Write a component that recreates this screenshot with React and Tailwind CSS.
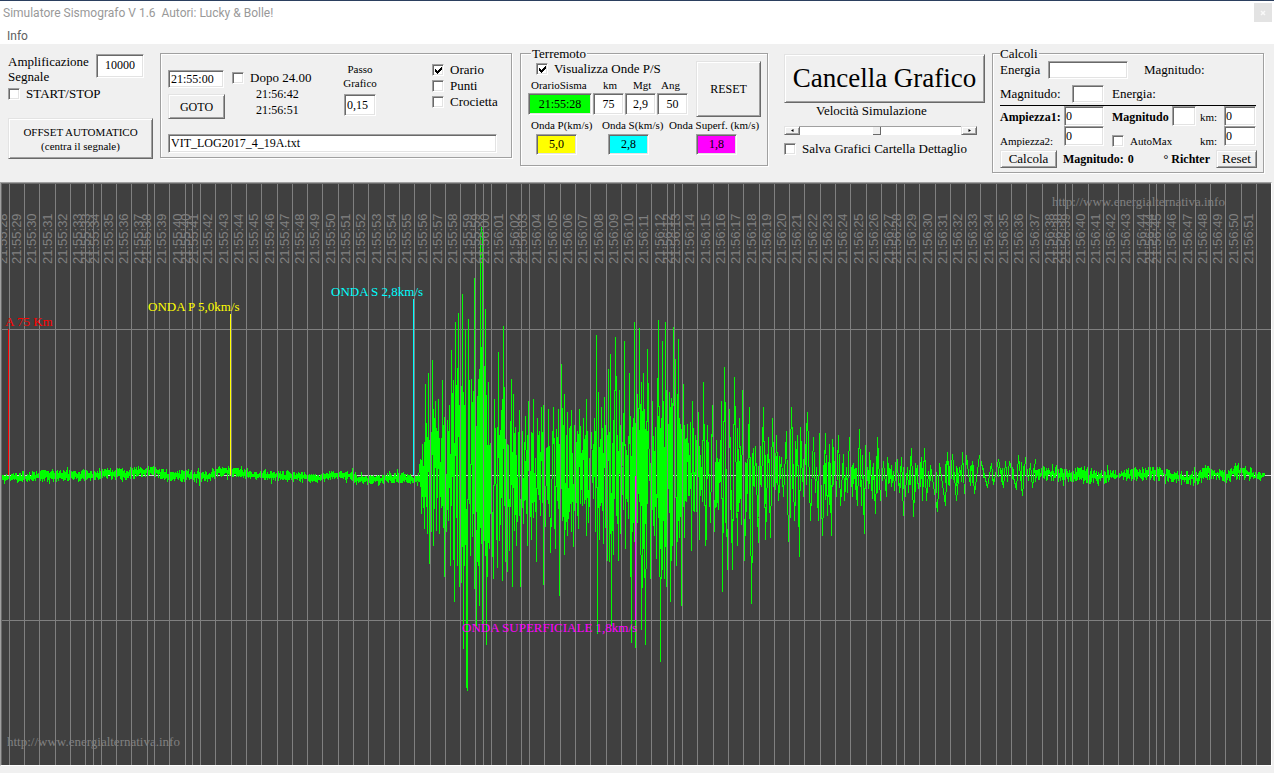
import React from "react";

const SUNKEN =
  "block min-w-0 rounded-none border border-t-[#a0a0a0] border-l-[#a0a0a0] border-r-white border-b-white shadow-[inset_1px_1px_0_#696969,inset_-1px_-1px_0_#e3e3e3] text-[12px] leading-4 text-black outline-none";
const RAISED =
  "block border border-t-[#e3e3e3] border-l-[#e3e3e3] border-r-[#696969] border-b-[#696969] bg-[#f0f0f0] shadow-[inset_1px_1px_0_#fff,inset_-1px_-1px_0_#a0a0a0] text-black";
const GROUP =
  "min-w-0 border border-[#a0a0a0] shadow-[1px_1px_0_#fff,inset_1px_1px_0_#fff]";

function Field({ label, className = "", value = "", id }) {
  return (
    <input
      id={id}
      type="text"
      aria-label={label}
      defaultValue={value}
      className={`${SUNKEN} ${className}`}
    />
  );
}

function Check({ children, checked = false, className = "" }) {
  return (
    <label className={`flex items-center whitespace-nowrap ${className}`}>
      <span className="grid size-3 shrink-0">
        <input
          type="checkbox"
          defaultChecked={checked}
          className="peer col-start-1 row-start-1 size-3 appearance-none border border-t-[#a0a0a0] border-l-[#a0a0a0] border-r-white border-b-white bg-white shadow-[inset_1px_1px_0_#696969,inset_-1px_-1px_0_#e3e3e3]"
        />
        <svg
          viewBox="0 0 12 12"
          shapeRendering="crispEdges"
          className="pointer-events-none col-start-1 row-start-1 hidden size-3 peer-checked:block"
        >
          <path
            d="M3 5h1v3h-1zM4 6h1v3h-1zM5 7h1v3h-1zM6 6h1v3h-1zM7 5h1v3h-1zM8 4h1v3h-1zM9 3h1v3h-1z"
            fill="#000"
          />
        </svg>
      </span>
      <span>{children}</span>
    </label>
  );
}

/* ---------- chart data ---------- */

const GRID = [
  9, 24, 39, 55, 70, 85, 93, 101, 116, 131, 147, 154, 169, 185, 192, 200, 215, 231, 246, 261, 277,
  292, 307, 322, 338, 353, 368, 384, 399, 414, 430, 445, 460, 475, 483, 491, 506, 521, 529, 544,
  560, 575, 590, 606, 621, 636, 651, 667, 674, 682, 697, 713, 728, 743, 759, 774, 789, 804, 820,
  835, 850, 866, 881, 896, 904, 919, 935, 950, 965, 980, 996, 1011, 1026, 1042, 1057, 1065, 1072,
  1088, 1103, 1118, 1133, 1149, 1156, 1164, 1179, 1195, 1210, 1225, 1241, 1256,
];

const TIMES = [
  [2, "55:28"], [16, "55:29"], [31, "55:30"], [47, "55:31"], [62, "55:32"], [77, "55:33"],
  [85, "55:33"], [94, "55:34"], [108, "55:35"], [123, "55:36"], [138, "55:37"], [146, "55:38"],
  [161, "55:39"], [177, "55:40"], [185, "55:40"], [193, "55:41"], [207, "55:42"], [223, "55:43"],
  [238, "55:44"], [253, "55:45"], [269, "55:46"], [284, "55:47"], [299, "55:48"], [314, "55:49"],
  [330, "55:50"], [345, "55:51"], [360, "55:52"], [376, "55:53"], [391, "55:54"], [406, "55:55"],
  [422, "55:56"], [437, "55:57"], [452, "55:58"], [467, "55:59"], [475, "55:59"], [484, "56:00"],
  [498, "56:01"], [514, "56:02"], [522, "56:03"], [536, "56:04"], [552, "56:05"], [567, "56:06"],
  [582, "56:07"], [598, "56:08"], [613, "56:09"], [628, "56:10"], [643, "56:11"], [659, "56:12"],
  [667, "56:12"], [675, "56:13"], [689, "56:14"], [705, "56:15"], [720, "56:16"], [735, "56:17"],
  [751, "56:18"], [766, "56:19"], [781, "56:20"], [796, "56:21"], [812, "56:22"], [827, "56:23"],
  [842, "56:24"], [858, "56:25"], [873, "56:26"], [888, "56:27"], [896, "56:28"], [911, "56:29"],
  [927, "56:30"], [942, "56:31"], [957, "56:32"], [972, "56:33"], [988, "56:34"], [1003, "56:35"],
  [1018, "56:36"], [1034, "56:37"], [1049, "56:38"], [1057, "56:38"], [1065, "56:39"],
  [1080, "56:40"], [1095, "56:41"], [1110, "56:42"], [1125, "56:43"], [1141, "56:44"],
  [1149, "56:44"], [1156, "56:45"], [1171, "56:46"], [1187, "56:47"], [1202, "56:48"],
  [1217, "56:49"], [1233, "56:50"], [1248, "56:51"],
];

const CRESTS = [
  420, 459, 422, 444, 425, 384, 428, 373, 432, 360, 435, 401, 438, 399, 442, 380, 447, 420, 449,
  405, 451, 350, 455, 322, 458, 313, 462, 294, 465, 330, 468, 319, 471, 379, 474, 278, 478, 379,
  480, 236, 481, 227, 482, 236, 485, 309, 488, 382, 490, 443, 494, 399, 498, 352, 501, 410, 503,
  326, 507, 444, 511, 379, 513, 394, 515, 427, 519, 410, 522, 431, 525, 416, 528, 401, 533, 399,
  537, 418, 541, 407, 543, 405, 546, 448, 548, 409, 553, 407, 556, 429, 558, 409, 561, 364, 564,
  394, 567, 412, 571, 410, 574, 425, 579, 409, 583, 418, 586, 399, 591, 432, 594, 418, 596, 335,
  598, 392, 601, 407, 604, 397, 608, 369, 610, 354, 615, 337, 619, 390, 622, 442, 624, 341, 626,
  450, 629, 373, 632, 427, 634, 322, 637, 394, 639, 328, 643, 373, 647, 349, 650, 463, 652, 401,
  655, 427, 658, 320, 662, 341, 665, 322, 669, 392, 674, 289, 678, 339, 680, 424, 683, 384, 687,
  424, 690, 422, 692, 401, 695, 435, 698, 412, 700, 455, 703, 382, 707, 425, 712, 405, 716, 440,
  719, 459, 721, 401, 724, 367, 729, 409, 734, 377, 739, 418, 742, 390, 746, 463, 749, 407, 753,
  448, 755, 446, 760, 446, 763, 407, 768, 437, 772, 418, 776, 435, 781, 457, 786, 431, 791, 407,
  797, 435, 800, 427, 803, 459, 807, 412, 813, 437, 816, 467, 819, 433, 825, 433, 829, 444, 832,
  439, 838, 435, 843, 454, 846, 467, 849, 437, 853, 463, 859, 429, 862, 455, 865, 445, 869, 452,
  873, 463, 877, 437, 883, 461, 887, 457, 891, 465, 896, 452, 901, 457, 907, 467, 911, 448, 915,
  463, 921, 457, 924, 448, 930, 465, 939, 463, 947, 452, 952, 454, 959, 467, 962, 452, 966, 455,
  972, 461, 979, 455, 991, 463, 998, 459, 1005, 461, 1009, 461, 1018, 455, 1025, 457, 1030, 463,
  1035, 459,
];

const TROUGHS = [
  417, 486, 421, 513, 424, 528, 427, 533, 429, 563, 431, 531, 433, 545, 436, 530, 439, 533, 441,
  507, 444, 576, 446, 531, 448, 520, 450, 565, 454, 601, 457, 565, 460, 676, 463, 648, 466, 684,
  467, 690, 470, 555, 474, 588, 476, 625, 479, 605, 482, 623, 484, 540, 486, 644, 489, 548, 493,
  578, 497, 567, 499, 540, 502, 580, 505, 561, 507, 571, 509, 550, 512, 586, 514, 530, 516, 545,
  520, 586, 523, 523, 527, 545, 531, 539, 533, 517, 536, 561, 540, 515, 543, 584, 545, 526, 550,
  552, 555, 548, 557, 500, 559, 595, 562, 520, 564, 554, 567, 535, 571, 531, 573, 546, 578, 528,
  582, 505, 586, 535, 588, 522, 593, 498, 595, 531, 597, 633, 599, 539, 603, 543, 607, 560, 611,
  625, 613, 554, 618, 560, 620, 533, 625, 548, 628, 518, 631, 642, 633, 522, 635, 647, 638, 493,
  641, 629, 645, 644, 650, 578, 654, 535, 656, 558, 660, 661, 664, 578, 666, 586, 670, 601, 676,
  565, 681, 605, 684, 537, 686, 501, 691, 550, 694, 511, 696, 511, 699, 539, 702, 501, 705, 545,
  706, 535, 710, 522, 714, 531, 718, 509, 722, 591, 727, 569, 732, 569, 737, 545, 741, 524, 744,
  560, 746, 511, 751, 603, 758, 542, 761, 486, 765, 539, 770, 537, 774, 509, 778, 500, 783, 496,
  788, 541, 794, 520, 799, 556, 803, 496, 810, 520, 815, 492, 818, 520, 822, 535, 827, 515, 831,
  535, 836, 496, 840, 505, 844, 500, 847, 492, 852, 496, 857, 505, 861, 505, 864, 533, 868, 488,
  872, 498, 875, 513, 880, 500, 886, 496, 891, 486, 894, 490, 899, 492, 903, 515, 908, 492, 913,
  516, 918, 488, 922, 500, 926, 500, 929, 486, 937, 511, 945, 505, 949, 485, 956, 500, 964, 493,
  974, 493, 987, 487, 993, 484, 1003, 487, 1016, 489, 1022, 495, 1032, 487,
];

function makeRandom(start) {
  let seed = start;
  return () => {
    seed = (seed * 1103515245 + 12345) % 2147483648;
    return seed / 2147483648;
  };
}

function pairs(list, kind) {
  const out = [];
  for (let i = 0; i < list.length; i += 2) out.push({ x: list[i], y: list[i + 1], kind });
  return out;
}

function buildQuake() {
  const pts = [...pairs(CRESTS, "top"), ...pairs(TROUGHS, "low")].sort((a, b) => a.x - b.x);
  const out = [];
  pts.forEach((p, i) => {
    const prev = pts[i - 1];
    if (prev && prev.kind === p.kind && p.x - prev.x > 1) {
      const reach = Math.min(Math.abs(prev.y - 475), Math.abs(p.y - 475)) * 0.4;
      const y = p.kind === "top" ? 475 + reach : 475 - reach;
      out.push(`${Math.round((p.x + prev.x) / 2) + 0.5},${Math.round(y) + 0.5}`);
    }
    out.push(`${p.x + 0.5},${p.y + 0.5}`);
  });
  return out.join(" ");
}

function sample(list, x) {
  for (let i = 0; i + 3 < list.length; i += 2) {
    if (x >= list[i] && x <= list[i + 2]) {
      const t = (x - list[i]) / (list[i + 2] - list[i]);
      return list[i + 1] + (list[i + 3] - list[i + 1]) * t;
    }
  }
  return 475;
}

/* Short oscillations packed between the main crests */
function buildCore() {
  const rnd = makeRandom(419);
  let d = "";
  for (let x = 421; x < 1035; x += 1) {
    const density = x < 690 ? 0.62 : x < 880 ? 0.22 : 0.3;
    const hit = rnd() < density;
    const a = 0.2 + rnd() * 0.55;
    const b = 0.2 + rnd() * 0.55;
    if (hit) {
      const top = 475 + (sample(CRESTS, x) - 475) * a;
      const low = 475 + (sample(TROUGHS, x) - 475) * b;
      d += `M${x + 0.5} ${Math.round(top)}V${Math.round(low)}`;
    }
  }
  return d;
}

/* [x, centre, half height] of the quiet trace */
const CALM_LEFT = [
  [2, 477, 3], [25, 477, 4], [45, 475, 5], [90, 475, 5], [105, 473, 5], [125, 474, 5],
  [140, 471, 5], [156, 471, 5], [165, 475, 5], [190, 475, 5], [208, 476, 5], [220, 470, 5],
  [235, 471, 5], [250, 475, 4], [300, 476, 5], [314, 479, 4], [332, 475, 4], [352, 475, 4],
  [354, 479, 4], [380, 479, 4], [400, 477, 5], [419, 479, 4],
];
const CALM_RIGHT = [
  [1035, 474, 8], [1050, 473, 7], [1070, 476, 7], [1080, 474, 9], [1100, 477, 8], [1125, 474, 6],
  [1160, 473, 7], [1175, 477, 6], [1197, 478, 8], [1205, 472, 7], [1225, 475, 6], [1235, 470, 9],
  [1250, 473, 7], [1256, 477, 6], [1264, 475, 5],
];

function buildCalm(knots, seedStart, base) {
  const rnd = makeRandom(seedStart);
  let d = "";
  let k = 0;
  for (let x = knots[0][0]; x <= knots[knots.length - 1][0]; x += 1) {
    while (k < knots.length - 2 && x > knots[k + 1][0]) k += 1;
    const [x0, c0, a0] = knots[k];
    const [x1, c1, a1] = knots[k + 1];
    const t = (x - x0) / (x1 - x0);
    const c = c0 + (c1 - c0) * t;
    const a = a0 + (a1 - a0) * t;
    const up = a * (base + rnd()) * (rnd() > 0.9 ? 1.6 : 1);
    const down = a * (base + rnd()) * (rnd() > 0.93 ? 1.6 : 1);
    d += `M${x + 0.5} ${Math.round(c - up)}V${Math.round(c + down) + 1}`;
  }
  return d;
}

const QUAKE = buildQuake();
const CORE = buildCore();
const CALM = buildCalm(CALM_LEFT, 71, 0.15) + buildCalm(CALM_RIGHT, 2017, 0);
const GRID_PATH = GRID.map((x) => `M${x + 0.5} 184V765`).join("");

function Chart() {
  return (
    <svg
      viewBox="2 184 1269 581"
      role="img"
      aria-label="Sismogramma"
      className="block h-auto w-full bg-[#404040]"
    >
      <g shapeRendering="crispEdges" fill="none" strokeWidth="1">
        <path d="M2 329.5H1271M2 620.5H1271" stroke="#808080" />
        <path d="M2 475.5H1271" stroke="#d0d0d0" />
        <path d={CALM} stroke="#00ff00" />
        <path d={CORE} stroke="#00ff00" />
        <polyline points={QUAKE} stroke="#00ff00" />
        <path d={GRID_PATH} stroke="#808080" />
        <path d="M8.5 329V475" stroke="#ff0000" />
        <path d="M230.5 314V475" stroke="#ffff00" />
        <path d="M413.5 299V475" stroke="#00ffff" />
        <path d="M635.5 476V620" stroke="#ff00ff" />
      </g>
      <g fill="#808080" className="font-['Liberation_Sans',Arial,sans-serif] text-[13px]">
        {TIMES.map(([x, t]) => (
          <text key={x} transform={`translate(${x + 5} 264) rotate(-90)`}>
            {`21:${t}`}
          </text>
        ))}
      </g>
      <g className="font-['Liberation_Serif','Times_New_Roman',serif] text-[13px]">
        <text x="5" y="326" fill="#ff0000">A 75 Km</text>
        <text x="148" y="311" fill="#ffff00">ONDA P 5,0km/s</text>
        <text x="331" y="296" fill="#00ffff">ONDA S 2,8km/s</text>
        <text x="462" y="632" fill="#ff00ff">ONDA SUPERFICIALE 1,8km/s</text>
        <text x="1052" y="206" fill="#808080">http://www.energialternativa.info</text>
        <text x="7" y="746" fill="#808080">http://www.energialternativa.info</text>
      </g>
    </svg>
  );
}

/* ---------- panels ---------- */

function SignalPanel() {
  return (
    <section className="w-[145px] pt-px">
      <div className="flex">
        <label htmlFor="amp" className="w-[88px] leading-[15px]">
          Amplificazione Segnale
        </label>
        <Field id="amp" label="Amplificazione Segnale" value="10000" className="h-6 w-12 bg-white pb-[2px] text-center" />
      </div>
      <Check className="mt-[2px] h-4 gap-[6px]">START/STOP</Check>
      <button type="button" className={`${RAISED} mt-4 h-[41px] w-full text-[11px] leading-[14px]`}>
        OFFSET AUTOMATICO
        <br />
        (centra il segnale)
      </button>
    </section>
  );
}

function PlaybackPanel() {
  return (
    <section className={`${GROUP} h-[105px] w-[352px] px-[7px] pt-2`}>
      <div className="flex h-[72px]">
        <div className="flex w-16 flex-col gap-[6px] pt-2">
          <Field label="Ora di partenza" value="21:55:00" className="h-[18px] w-14 bg-white pl-[2px]" />
          <button type="button" className={`${RAISED} h-[25px] w-[57px] text-[12px] leading-4`}>
            GOTO
          </button>
        </div>
        <div className="w-[102px] pt-2 leading-4">
          <Check className="h-4 gap-[6px]">Dopo 24.00</Check>
          <div className="pl-6 text-[12px] leading-4">21:56:42</div>
          <div className="pl-6 text-[12px] leading-4">21:56:51</div>
        </div>
        <div className="flex w-[52px] flex-col items-center">
          <label htmlFor="passo" className="text-center text-[11px] leading-[14px]">
            Passo
            <br />
            Grafico
          </label>
          <Field id="passo" label="Passo Grafico" value="0,15" className="mt-1 h-[22px] w-8 bg-white pl-[2px]" />
        </div>
        <div className="ml-auto w-[72px] leading-4">
          <Check checked className="h-4 gap-[6px]">Orario</Check>
          <Check className="h-4 gap-[6px]">Punti</Check>
          <Check className="h-4 gap-[6px]">Crocietta</Check>
        </div>
      </div>
      <Field label="File di log" value="VIT_LOG2017_4_19A.txt" className="h-[19px] w-[329px] bg-white pl-[2px]" />
    </section>
  );
}

function QuakePanel() {
  return (
    <fieldset className={`${GROUP} h-[119px] w-[248px] pl-[7px]`}>
      <legend className="ml-[3px] bg-[#f0f0f0] px-px leading-[13px]">Terremoto</legend>
      <div className="flex">
        <div className="w-[168px]">
          <Check checked className="mt-px ml-2 h-4 gap-[6px]">Visualizza Onde P/S</Check>
          <div className="flex h-4 text-[11px] leading-4">
            <span className="w-[65px] pl-[3px]">OrarioSisma</span>
            <span className="w-8 pl-[10px]">km</span>
            <span className="w-8 pl-2">Mgt</span>
            <span className="w-8 pl-1">Ang</span>
          </div>
          <div className="flex gap-px">
            <Field label="OrarioSisma" value="21:55:28" className="h-[22px] w-16 bg-[#00ff00] text-center" />
            <Field label="km" value="75" className="h-[22px] w-[31px] bg-white text-center" />
            <Field label="Mgt" value="2,9" className="h-[22px] w-[31px] bg-white text-center" />
            <Field label="Ang" value="50" className="h-[22px] w-[31px] bg-white text-center" />
          </div>
        </div>
        <button type="button" className={`${RAISED} mt-px h-14 w-[65px] text-[12px]`}>
          RESET
        </button>
      </div>
      <div className="flex h-[17px] text-[11px] leading-[17px] whitespace-nowrap">
        <label htmlFor="vp" className="w-[71px] pl-[3px]">Onda P(km/s)</label>
        <label htmlFor="vs" className="w-[67px] pl-[3px]">Onda S(km/s)</label>
        <label htmlFor="vsup" className="pl-[3px]">Onda Superf. (km/s)</label>
      </div>
      <div className="flex">
        <Field id="vp" label="Onda P(km/s)" value="5,0" className="ml-2 h-[21px] w-[41px] bg-[#ffff00] text-center" />
        <Field id="vs" label="Onda S(km/s)" value="2,8" className="ml-[31px] h-[21px] w-[41px] bg-[#00ffff] text-center" />
        <Field id="vsup" label="Onda Superf. (km/s)" value="1,8" className="ml-[47px] h-[21px] w-[41px] bg-[#ff00ff] text-center" />
      </div>
    </fieldset>
  );
}

function Arrow({ left = false }) {
  return (
    <button
      type="button"
      aria-label={left ? "Più lento" : "Più veloce"}
      className={`${RAISED} flex h-[9px] w-4 items-center justify-center`}
    >
      <svg viewBox="0 0 3 3" className="size-[3px]">
        <path d={left ? "M2.5 0v3L0 1.5z" : "M.5 0v3L3 1.5z"} fill="#000" />
      </svg>
    </button>
  );
}

function SpeedPanel() {
  return (
    <section className="w-[201px] pt-px">
      <button type="button" className={`${RAISED} h-[49px] w-full text-[27px] leading-none whitespace-nowrap`}>
        Cancella Grafico
      </button>
      <label htmlFor="vel" className="block h-[23px] pl-8 leading-[15px]">
        Velocità Simulazione
      </label>
      <div className="flex w-[193px]">
        <Arrow left />
        <input
          id="vel"
          type="range"
          defaultValue="48"
          className="h-[9px] min-w-0 flex-1 appearance-none border-t border-[#a0a0a0] bg-white [&::-webkit-slider-thumb]:h-2 [&::-webkit-slider-thumb]:w-2 [&::-webkit-slider-thumb]:appearance-none [&::-webkit-slider-thumb]:border-r [&::-webkit-slider-thumb]:border-b [&::-webkit-slider-thumb]:border-[#696969] [&::-webkit-slider-thumb]:bg-[#f0f0f0]"
        />
        <Arrow />
      </div>
      <Check className="mt-[6px] h-4 gap-[6px]">Salva Grafici Cartella Dettaglio</Check>
    </section>
  );
}

function CalcPanel() {
  return (
    <fieldset className={`${GROUP} h-[126px] w-[272px] pr-[6px] pl-[7px]`}>
      <legend className="bg-[#f0f0f0] pr-px leading-[13px]">Calcoli</legend>
      <div className="flex h-[25px] items-start pt-px leading-[18px]">
        <label htmlFor="en" className="w-12">Energia</label>
        <Field id="en" label="Energia" className="h-[18px] w-20 bg-white" />
        <span className="pl-4">Magnitudo:</span>
      </div>
      <div className="flex h-5 items-start leading-[18px]">
        <label htmlFor="mg" className="w-[72px]">Magnitudo:</label>
        <Field id="mg" label="Magnitudo" className="h-[18px] w-8 bg-white" />
        <span className="pl-2">Energia:</span>
      </div>
      <div className="mr-px h-px bg-black" />
      <div className="flex text-[12px] leading-[23px]">
        <label htmlFor="a1" className="w-16 font-bold">Ampiezza1:</label>
        <Field id="a1" label="Ampiezza1" value="0" className="h-5 w-10 bg-white pl-px" />
        <label htmlFor="m1" className="w-[68px] pl-2 font-bold">Magnitudo</label>
        <Field id="m1" label="Magnitudo ampiezza" className="h-5 w-6 bg-white" />
        <label htmlFor="k1" className="w-7 pl-1 text-[11px] leading-[23px]">km:</label>
        <Field id="k1" label="km" value="0" className="h-5 w-8 bg-white pl-px" />
      </div>
      <div className="-mt-[3px] flex text-[11px]">
        <label htmlFor="a2" className="w-16 pt-[6px] leading-[18px]">Ampiezza2:</label>
        <Field id="a2" label="Ampiezza2" value="0" className="h-5 w-10 bg-white pl-px" />
        <Check className="w-[92px] gap-[6px] pt-[6px] pl-2">AutoMax</Check>
        <label htmlFor="k2" className="w-7 pt-[6px] pl-1 leading-[18px]">km:</label>
        <Field id="k2" label="km" value="0" className="h-5 w-8 bg-white pl-px" />
      </div>
      <div className="flex items-center text-[12px] font-bold">
        <button type="button" className={`${RAISED} h-[18px] w-[57px] text-[13px] leading-[14px] font-normal`}>
          Calcola
        </button>
        <span className="pl-[6px]">Magnitudo:</span>
        <span className="pl-1">0</span>
        <span className="mr-[6px] ml-auto">° Richter</span>
        <button type="button" className={`${RAISED} h-[18px] w-[41px] text-[13px] leading-[14px] font-normal`}>
          Reset
        </button>
      </div>
    </fieldset>
  );
}

export default function App() {
  return (
    <div className="min-h-screen bg-[#f0f0f0] font-['Liberation_Serif','Times_New_Roman',serif] text-[13px] text-black">
      <header className="border-t border-[#2b3f5f] bg-white font-['Open_Sans','Noto_Sans',sans-serif]">
        <div className="flex h-[26px] items-start justify-between pr-[2px] pl-[3px]">
          <h1 className="font-['Roboto','Open_Sans',sans-serif] text-[12px] leading-6 whitespace-pre text-[#999999]">
            {"Simulatore Sismografo V 1.6  Autori: Lucky & Bolle!"}
          </h1>
          <button
            type="button"
            aria-label="Chiudi"
            className="mt-[2px] flex h-[19px] w-[18px] items-center justify-center bg-[#e3e3e3]"
          >
            <svg viewBox="0 0 6 6" className="size-[6px]">
              <path d="M1 1l4 4M5 1l-4 4" stroke="#f8f8f8" strokeWidth="1.5" />
            </svg>
          </button>
        </div>
        <nav className="h-[17px] pl-[7px]">
          <a href="#info" className="block font-['Roboto','Open_Sans',sans-serif] text-[12px] leading-[18px] text-[#606060]">
            Info
          </a>
        </nav>
      </header>
      <main>
        <div className="flex min-h-[138px] flex-wrap items-start pt-[3px] pl-2">
          <div className="mr-[7px] pt-[6px]"><SignalPanel /></div>
          <div className="mr-2 pt-[6px]"><PlaybackPanel /></div>
          <div className="mr-4"><QuakePanel /></div>
          <div className="mr-[7px] pt-[6px]"><SpeedPanel /></div>
          <CalcPanel />
        </div>
        <div className="mr-[2px] border border-t-[#a0a0a0] border-r-white border-b-white border-l-[#a0a0a0]">
          <div className="border-t border-l border-[#696969]">
            <Chart />
          </div>
        </div>
      </main>
    </div>
  );
}
